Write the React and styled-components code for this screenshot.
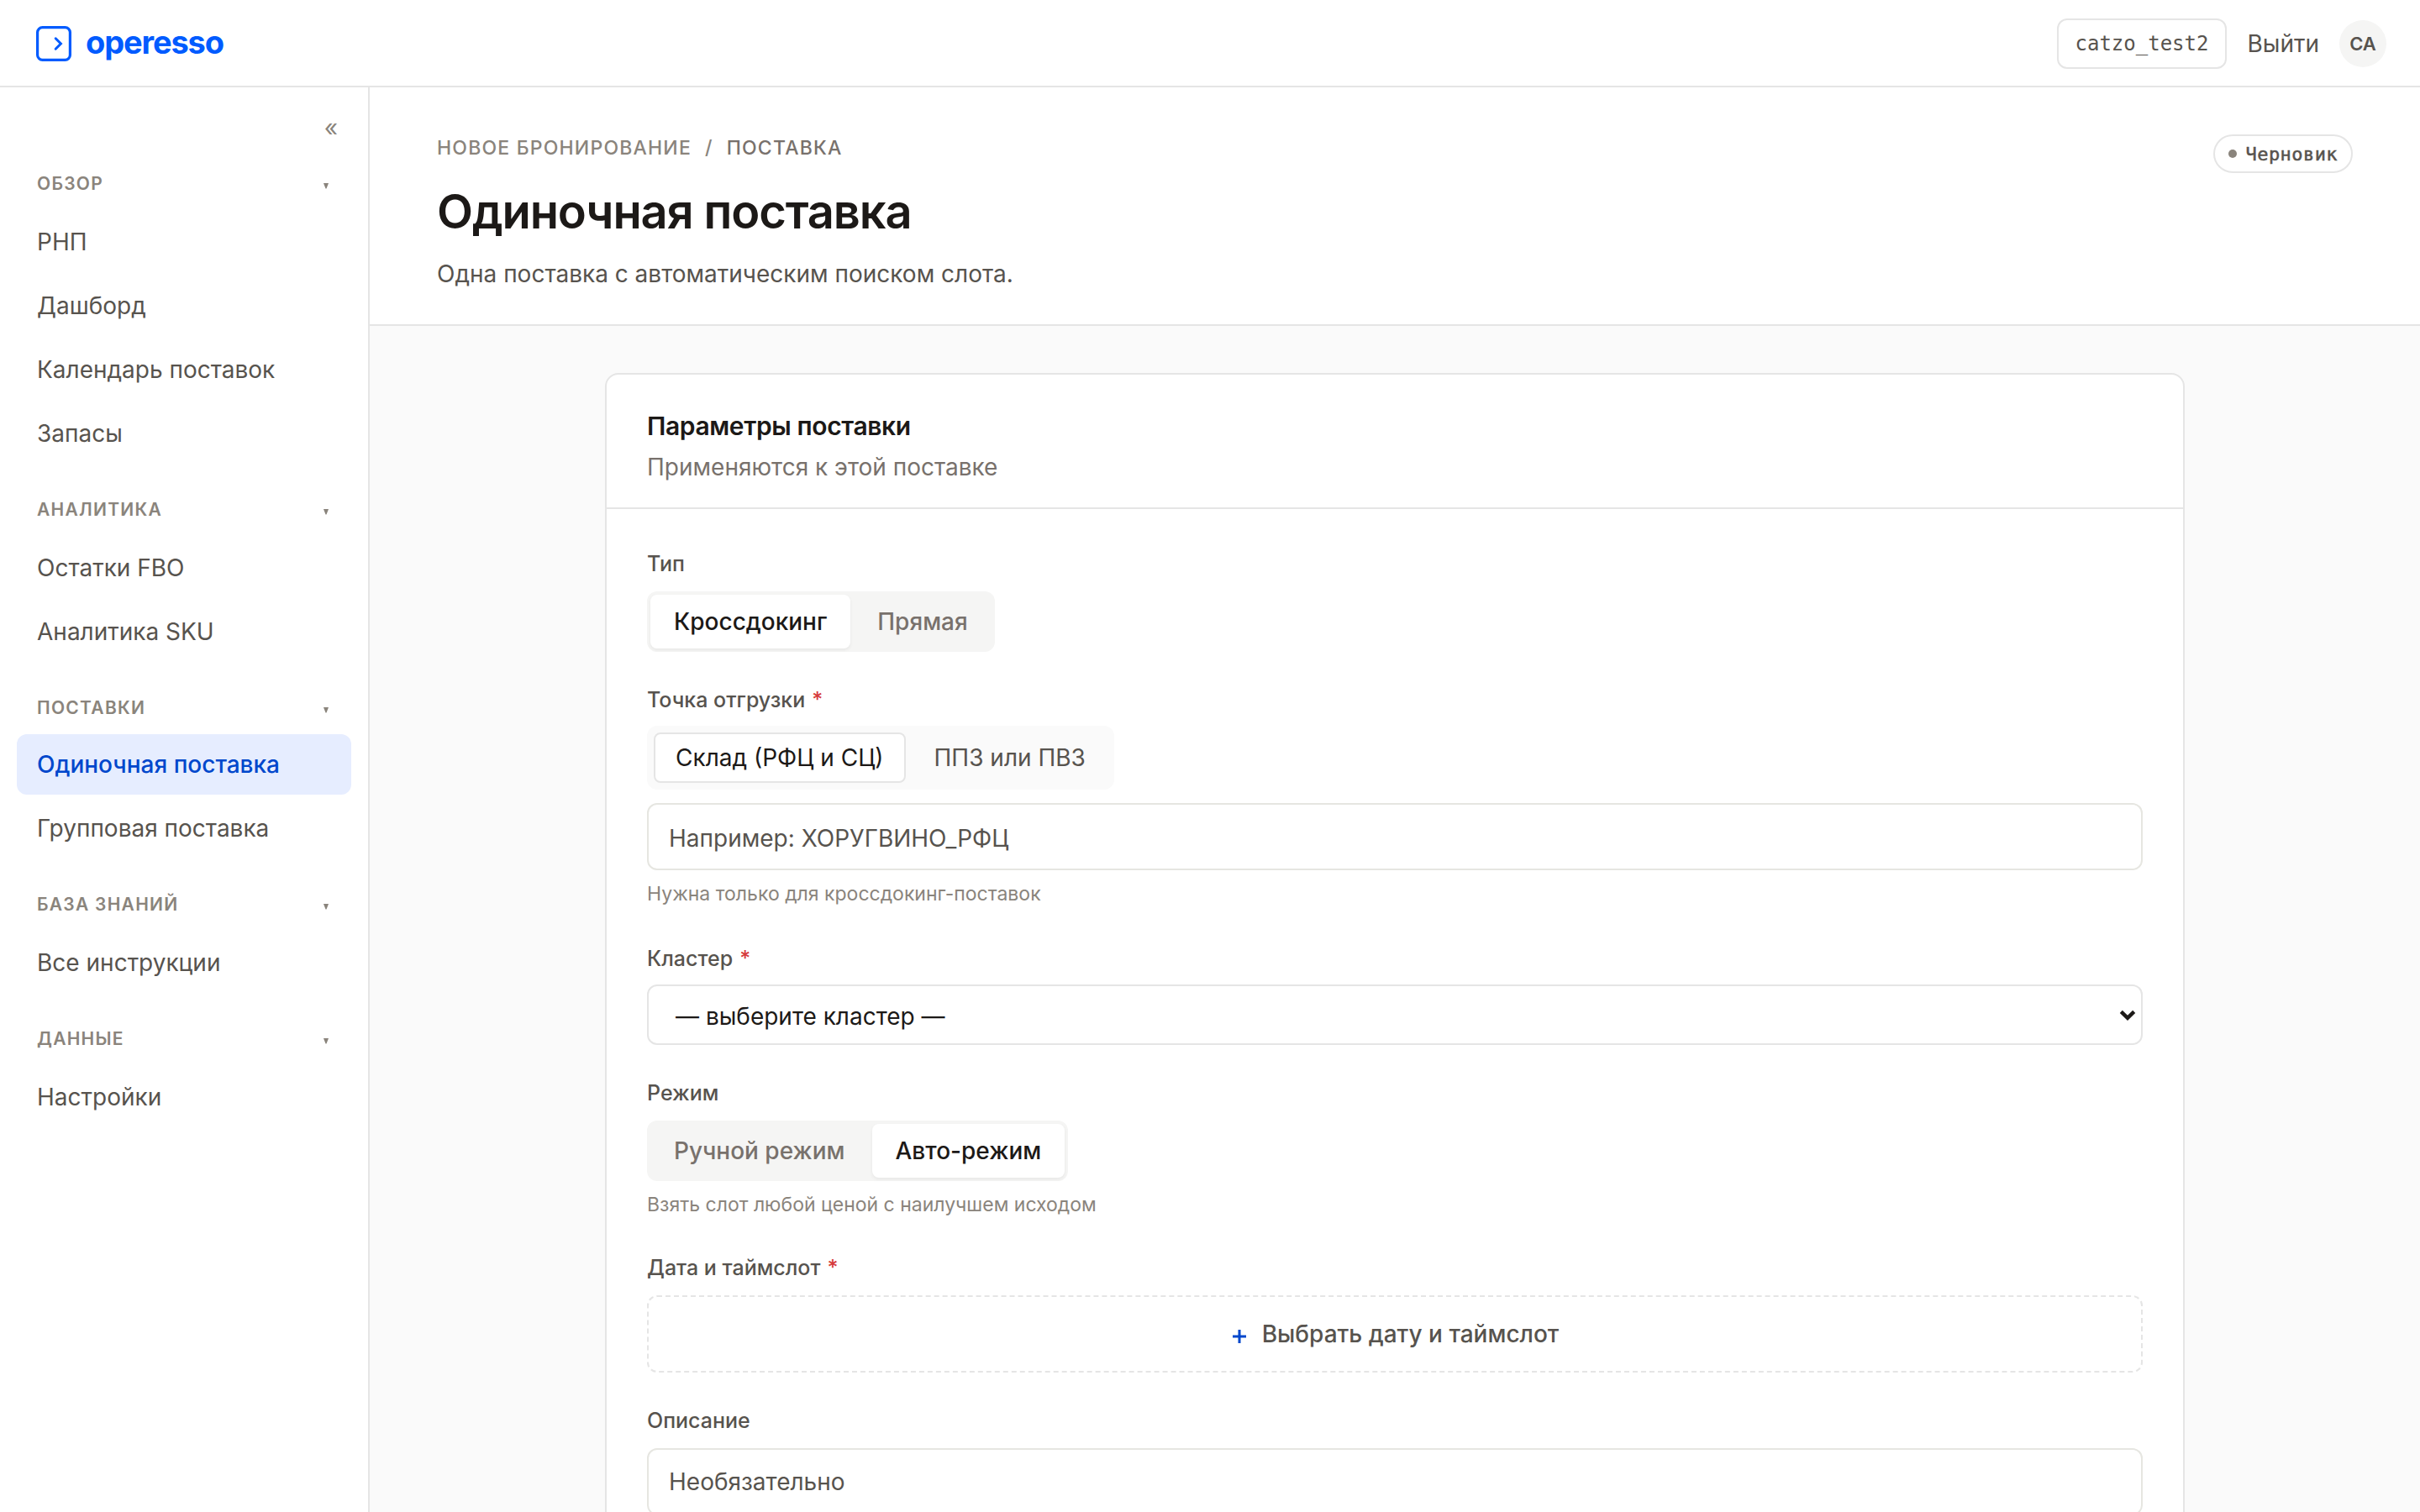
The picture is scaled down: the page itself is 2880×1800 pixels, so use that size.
import React, { Component } from "react";
import styled, { createGlobalStyle } from "styled-components";

const GlobalStyle = createGlobalStyle`
  * {
    box-sizing: border-box;
  }
  body {
    margin: 0;
    background: #fafafa;
    color: #1c1917;
    font-family: Inter, "Liberation Sans", sans-serif;
    font-size: 28px;
  }
  button, input {
    font-family: inherit;
    font-size: inherit;
    margin: 0;
  }
`;

const Page = styled.div`
  height: 1800px;
  overflow: hidden;
  display: flex;
  flex-direction: column;
`;

const TopBar = styled.header`
  flex: none;
  height: 104px;
  padding: 0 40px 0 43px;
  display: flex;
  align-items: center;
  justify-content: space-between;
  background: #fff;
  border-bottom: 2px solid #e5e5e5;
`;

const Brand = styled.div`
  display: flex;
  align-items: center;
  gap: 15px;
  padding-top: 2px;
  color: #005bff;
`;

const BrandName = styled.span`
  padding-bottom: 4px;
  font-size: 38px;
  line-height: 44px;
  font-weight: 700;
  letter-spacing: -0.03em;
`;

const Account = styled.div`
  display: flex;
  align-items: center;
  padding-top: 2px;
`;

const UserName = styled.div`
  height: 60px;
  padding: 0 20px;
  display: flex;
  align-items: center;
  border: 2px solid #e5e5e5;
  border-radius: 12px;
  color: #57534e;
  font-family: "DejaVu Sans Mono", "Liberation Mono", monospace;
  font-size: 24px;
`;

const Logout = styled.span`
  margin: 0 24px;
  color: #57534e;
`;

const Avatar = styled.div`
  width: 56px;
  height: 56px;
  display: flex;
  align-items: center;
  justify-content: center;
  border-radius: 50%;
  background: #f5f5f4;
  color: #57534e;
  font-size: 22px;
  font-weight: 600;
`;

const Body = styled.div`
  flex: 1;
  min-height: 0;
  display: flex;
`;

const Sidebar = styled.nav`
  flex: none;
  width: 440px;
  padding: 24px 20px 0;
  background: #fff;
  border-right: 2px solid #e5e5e5;
`;

const Collapse = styled.div`
  height: 69px;
  padding: 4px 16px 0 0;
  text-align: right;
  line-height: 40px;
  color: #8a847c;
`;

const Section = styled.div`
  & + & {
    margin-top: 33px;
  }
`;

const SectionHead = styled.div`
  height: ${props => (props.$short ? 53 : 55)}px;
  padding: 0 27px 0 24px;
  display: flex;
  justify-content: space-between;
  color: #8a847c;
  font-size: 21px;
  line-height: 43px;
  font-weight: 600;
  letter-spacing: 0.06em;

  svg {
    margin-top: 21px;
  }
`;

const NavItem = styled.div`
  height: 72px;
  padding: 0 24px;
  line-height: 72px;
  border-radius: 12px;
  color: ${props => (props.$active ? "#0047cc" : "#57534e")};
  background: ${props => (props.$active ? "#e6edff" : "transparent")};
  font-weight: ${props => (props.$active ? 500 : 400)};

  & + & {
    margin-top: 4px;
  }
`;

const Main = styled.main`
  flex: 1;
  min-width: 0;
`;

const PageHead = styled.div`
  height: 284px;
  padding: 56px 80px 0;
  display: flex;
  justify-content: space-between;
  align-items: flex-start;
  background: #fff;
  border-bottom: 2px solid #e5e5e5;
`;

const Crumbs = styled.div`
  display: flex;
  gap: 16px;
  color: #8a847c;
  font-size: 23px;
  line-height: 32px;
  font-weight: 500;
  letter-spacing: 0.052em;

  b {
    font-weight: 500;
    color: #78716c;
  }
`;

const Title = styled.h1`
  margin: 28px 0 0;
  font-size: 56px;
  line-height: 64px;
  font-weight: 600;
  letter-spacing: -0.02em;
`;

const Lead = styled.p`
  margin: 22px 0 0;
  line-height: 40px;
  color: #57534e;
`;

const Badge = styled.div`
  height: 46px;
  padding: 0 16px;
  display: flex;
  align-items: center;
  gap: 11px;
  border: 2px solid #e5e5e5;
  border-radius: 23px;
  color: #57534e;
  font-family: "DejaVu Sans Mono", "Liberation Mono", monospace;
  font-size: 22px;
  letter-spacing: 0.02em;
  -webkit-text-stroke: 0.5px #57534e;

  i {
    width: 10px;
    height: 10px;
    border-radius: 50%;
    background: #8a847c;
  }
`;

const Card = styled.section`
  width: 1880px;
  margin: 56px auto 0;
  background: #fff;
  border: 2px solid #e5e5e5;
  border-radius: 16px;
`;

const CardHead = styled.div`
  height: 160px;
  padding: 41px 48px 0;
  border-bottom: 2px solid #e5e5e5;
`;

const CardTitle = styled.h2`
  margin: 0;
  font-size: 30px;
  line-height: 40px;
  font-weight: 600;
  letter-spacing: -0.013em;
`;

const CardHint = styled.p`
  margin: 9px 0 0;
  line-height: 40px;
  color: #78716c;
`;

const Form = styled.div`
  padding: 48px 48px 56px;
  display: flex;
  flex-direction: column;
  gap: 40px;
`;

const Field = styled.div`
  display: flex;
  flex-direction: column;
  align-items: flex-start;
`;

const Label = styled.label`
  margin-bottom: ${props => (props.$close ? 14 : 16)}px;
  color: #57534e;
  font-size: 25px;
  line-height: 34px;
  font-weight: 500;

  span {
    margin-left: 8px;
    color: #d63b3b;
  }
`;

const Segments = styled.div`
  height: 72px;
  padding: 4px;
  display: flex;
  gap: 4px;
  background: #f5f5f4;
  border-radius: 12px;
`;

const Segment = styled.button`
  padding: 0 28px;
  border: 0;
  border-radius: 8px;
  font-weight: 500;
  color: ${props => (props.$active ? "#1c1917" : "#78716c")};
  background: ${props => (props.$active ? "#fff" : "transparent")};
  box-shadow: ${props => (props.$active ? "0 2px 4px rgba(0, 0, 0, 0.06)" : "none")};
`;

const PointTabs = styled.div`
  height: 76px;
  margin-bottom: 16px;
  padding: 8px;
  display: flex;
  gap: 8px;
  background: #fafafa;
  border-radius: 12px;
`;

const PointTab = styled.button`
  padding: 0 24px;
  border: 2px solid ${props => (props.$active ? "#e5e5e5" : "transparent")};
  border-radius: 8px;
  color: ${props => (props.$active ? "#1c1917" : "#57534e")};
  background: ${props => (props.$active ? "#fff" : "transparent")};
`;

const TextInput = styled.input`
  width: 100%;
  height: 80px;
  padding: ${props => props.$top}px 24px 0;
  border: 2px solid #e6e6e1;
  border-radius: 12px;
  background: #fff;

  &::placeholder {
    color: #57534e;
    opacity: 1;
  }
`;

const SelectBox = styled.div`
  width: 100%;
  height: 72px;
  padding: 3px 6px 0 32px;
  display: flex;
  align-items: center;
  justify-content: space-between;
  border: 2px solid #e5e5e5;
  border-radius: 12px;

  svg {
    margin-top: -2px;
  }
`;

const Help = styled.div`
  height: ${props => (props.$tall ? 48 : 46)}px;
  padding-top: 12px;
  color: #8a847c;
  font-size: 23px;
  line-height: 33px;
`;

const SlotButton = styled.button`
  width: 100%;
  height: 92px;
  padding: 0 0 0 2px;
  display: flex;
  align-items: center;
  justify-content: center;
  gap: 19px;
  border: 2px dashed #e5e5e5;
  border-radius: 12px;
  background: #fff;
  color: #57534e;
  font-weight: 500;

  svg {
    margin-top: 5px;
  }
`;

const sections = [
  { title: "ОБЗОР", items: ["РНП", "Дашборд", "Календарь поставок", "Запасы"] },
  { title: "АНАЛИТИКА", items: ["Остатки FBO", "Аналитика SKU"] },
  { title: "ПОСТАВКИ", short: true, items: ["Одиночная поставка", "Групповая поставка"] },
  { title: "БАЗА ЗНАНИЙ", items: ["Все инструкции"] },
  { title: "ДАННЫЕ", items: ["Настройки"] }
];

const Logo = () => (
  <svg width="44" height="44" viewBox="0 0 44 44" fill="none" stroke="currentColor" strokeWidth="3.2">
    <rect x="1.6" y="2.6" width="38.8" height="38.8" rx="6" />
    <path d="M23.2 15.8 L29.4 22 L23.2 28.2" strokeWidth="3" strokeLinecap="round" />
  </svg>
);

class App extends Component {
  constructor(props) {
    super(props);
    this.state = {
      page: "Одиночная поставка",
      type: "Кроссдокинг",
      point: "Склад (РФЦ и СЦ)",
      mode: "Авто-режим"
    };
  }

  renderSegments = (key, options) => (
    <Segments>
      {options.map(name => (
        <Segment
          key={name}
          $active={this.state[key] === name}
          onClick={() => this.setState({ [key]: name })}
        >
          {name}
        </Segment>
      ))}
    </Segments>
  );

  render() {
    const { page, point } = this.state;
    return (
      <Page>
        <GlobalStyle />
        <TopBar>
          <Brand>
            <Logo />
            <BrandName>operesso</BrandName>
          </Brand>
          <Account>
            <UserName>catzo_test2</UserName>
            <Logout>Выйти</Logout>
            <Avatar>CA</Avatar>
          </Account>
        </TopBar>
        <Body>
          <Sidebar>
            <Collapse>«</Collapse>
            {sections.map(section => (
              <Section key={section.title}>
                <SectionHead $short={section.short}>
                  {section.title}
                  <svg width="6" height="7" viewBox="0 0 6 7">
                    <path d="M0 0H6L3.5 6.5H2.5Z" fill="currentColor" />
                  </svg>
                </SectionHead>
                {section.items.map(item => (
                  <NavItem
                    key={item}
                    $active={item === page}
                    onClick={() => this.setState({ page: item })}
                  >
                    {item}
                  </NavItem>
                ))}
              </Section>
            ))}
          </Sidebar>
          <Main>
            <PageHead>
              <div>
                <Crumbs>
                  НОВОЕ БРОНИРОВАНИЕ <span>/</span> <b>ПОСТАВКА</b>
                </Crumbs>
                <Title>Одиночная поставка</Title>
                <Lead>Одна поставка с автоматическим поиском слота.</Lead>
              </div>
              <Badge>
                <i />
                Черновик
              </Badge>
            </PageHead>
            <Card>
              <CardHead>
                <CardTitle>Параметры поставки</CardTitle>
                <CardHint>Применяются к этой поставке</CardHint>
              </CardHead>
              <Form>
                <Field>
                  <Label>Тип</Label>
                  {this.renderSegments("type", ["Кроссдокинг", "Прямая"])}
                </Field>
                <Field>
                  <Label $close>
                    Точка отгрузки<span>*</span>
                  </Label>
                  <PointTabs>
                    {["Склад (РФЦ и СЦ)", "ППЗ или ПВЗ"].map(name => (
                      <PointTab
                        key={name}
                        $active={name === point}
                        onClick={() => this.setState({ point: name })}
                      >
                        {name}
                      </PointTab>
                    ))}
                  </PointTabs>
                  <TextInput $top={4} placeholder="Например: ХОРУГВИНО_РФЦ" />
                  <Help $tall>Нужна только для кроссдокинг-поставок</Help>
                </Field>
                <Field>
                  <Label $close>
                    Кластер<span>*</span>
                  </Label>
                  <SelectBox>
                    — выберите кластер —
                    <svg width="20" height="14" viewBox="0 0 20 14" fill="none">
                      <path d="M2.3 2.4 L10 9.9 L17.7 2.4" stroke="#1c1917" strokeWidth="4.4" />
                    </svg>
                  </SelectBox>
                </Field>
                <Field>
                  <Label>Режим</Label>
                  {this.renderSegments("mode", ["Ручной режим", "Авто-режим"])}
                  <Help>Взять слот любой ценой с наилучшем исходом</Help>
                </Field>
                <Field>
                  <Label>
                    Дата и таймслот<span>*</span>
                  </Label>
                  <SlotButton>
                    <svg width="16" height="16" viewBox="0 0 16 16">
                      <path d="M8 0V16M0 8H16" stroke="#0047cc" strokeWidth="3" />
                    </svg>
                    Выбрать дату и таймслот
                  </SlotButton>
                </Field>
                <Field>
                  <Label>Описание</Label>
                  <TextInput $top={0} placeholder="Необязательно" />
                </Field>
              </Form>
            </Card>
          </Main>
        </Body>
      </Page>
    );
  }
}

export default App;
